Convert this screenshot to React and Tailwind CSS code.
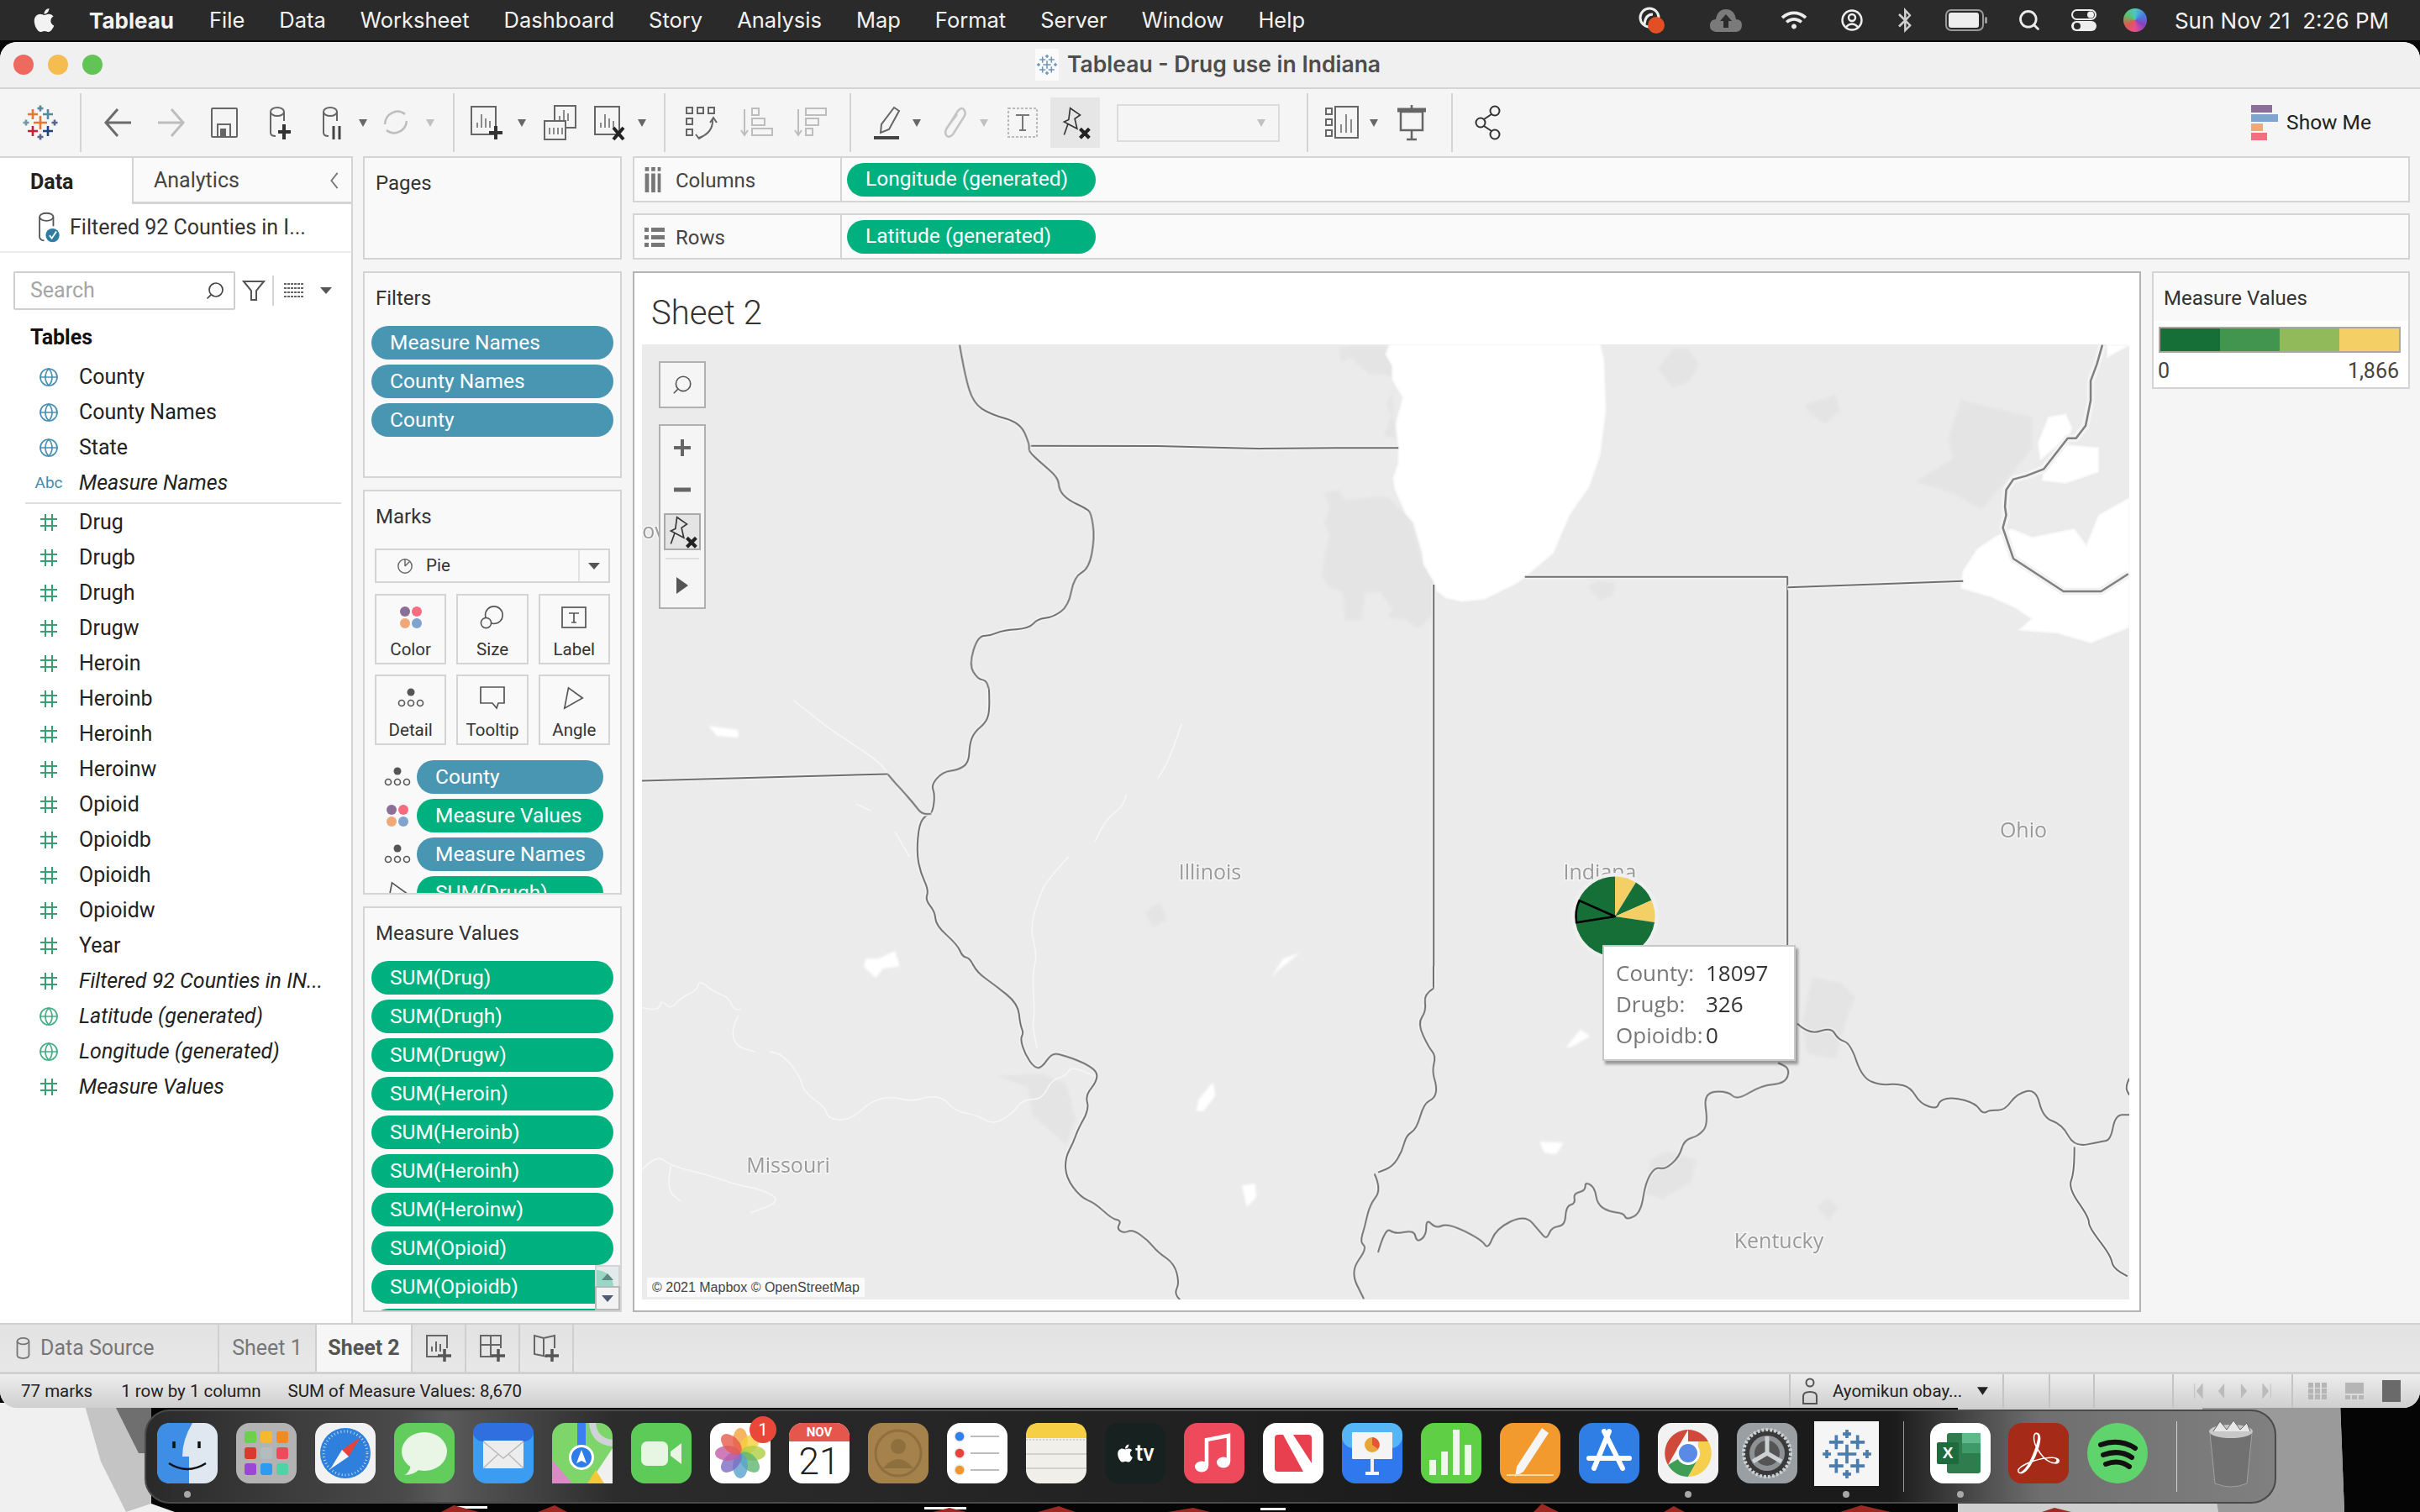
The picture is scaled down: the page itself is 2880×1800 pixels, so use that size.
import { Globe, Search } from "lucide-react";
import { FaApple, FaWifi, FaBluetoothB } from "react-icons/fa";
import { SiAdobeacrobatreader } from "react-icons/si";

const menuItems = ["File", "Data", "Worksheet", "Dashboard", "Story", "Analysis", "Map", "Format", "Server", "Window", "Help"];

const tableFields = [
  { name: "County", kind: "globe" },
  { name: "County Names", kind: "globe" },
  { name: "State", kind: "globe" },
  { name: "Measure Names", kind: "abc", italic: true }
];

const measureFields = [
  { name: "Drug", kind: "hash" },
  { name: "Drugb", kind: "hash" },
  { name: "Drugh", kind: "hash" },
  { name: "Drugw", kind: "hash" },
  { name: "Heroin", kind: "hash" },
  { name: "Heroinb", kind: "hash" },
  { name: "Heroinh", kind: "hash" },
  { name: "Heroinw", kind: "hash" },
  { name: "Opioid", kind: "hash" },
  { name: "Opioidb", kind: "hash" },
  { name: "Opioidh", kind: "hash" },
  { name: "Opioidw", kind: "hash" },
  { name: "Year", kind: "hash" },
  { name: "Filtered 92 Counties in IN...", kind: "hash", italic: true },
  { name: "Latitude (generated)", kind: "geo", italic: true },
  { name: "Longitude (generated)", kind: "geo", italic: true },
  { name: "Measure Values", kind: "hash", italic: true }
];

const measureValues = ["SUM(Drug)", "SUM(Drugh)", "SUM(Drugw)", "SUM(Heroin)", "SUM(Heroinb)", "SUM(Heroinh)", "SUM(Heroinw)", "SUM(Opioid)", "SUM(Opioidb)", ""];

// map transforms: each group was traced in its own crop of the map
const Z8 = "translate(740 320) scale(.5102 .3333)";
const Z9 = "translate(2100 320) scale(.4975 .3333)";
const Z10 = "translate(764 820) scale(.5735 .4656)";
const Z11 = "translate(1640 1150) scale(.5735 .3342)";
const Z12 = "translate(1500 405) scale(.4464 .3333)";

const rivers_borders = [
  [Z8, "788,272 800,380 820,480 860,520 930,550 952,632 948,650 975,690 1018,745 1020,790 1040,825 1082,855 1095,872 1103,960 1090,1070 1055,1100 1042,1205 1005,1245 970,1250 950,1285 890,1290 860,1310 830,1312 810,1415 830,1465 850,1470 856,1500"],
  [Z10, "720,0 722,50 715,85 690,110 680,140 678,190 655,208 625,212 600,245 608,270 603,318 590,322 575,345 570,420 578,470 595,515 588,540 608,570 610,605 655,655 665,685 680,688 695,725 735,760 780,805 785,860 792,880 785,895 795,935 815,970 830,968 850,932 870,935 915,955 945,978 943,1005 920,1040 928,1075 905,1125 895,1160 878,1200 880,1250 910,1300 940,1315 975,1355 995,1360 985,1380 1000,1392 1018,1382 1050,1410 1070,1440 1105,1470 1115,1520 1105,1545 1118,1565"],
  [Z10, "510,218 525,240 540,260 565,295 580,320 600,320"],
  [Z11, "115,80 95,100 100,160 82,205 105,290 120,320 112,375 122,430 118,470 95,490 80,580 58,605 50,660 30,715 0,735"],
  [Z10, "1520,1240 1535,1280 1510,1320 1500,1375 1490,1415 1505,1430 1470,1490 1498,1560"],
  [Z11, "0,1020 15,930 35,955 75,940 80,985 100,960 100,900 120,935 145,915 215,975 228,1010 245,935 305,885 335,945 350,975 360,930 388,925 390,855 410,845 405,810 430,800 430,768 450,790 455,850 480,875 510,880 515,905 545,880 555,770 575,715 595,725 625,680 635,620 665,605 685,565 675,450 725,445 745,478 795,425 845,418 855,365 830,345"],
  [Z11, "870,205 895,245 940,218 955,262 980,275 1005,400 1045,425 1075,418 1105,432 1125,490 1160,510 1165,478 1195,467 1240,490 1255,527 1270,512 1300,515 1325,455 1365,437 1380,540 1420,565 1445,645 1500,625 1520,620 1530,530 1559,530"],
  [Z11, "1445,645 1445,735 1432,790 1475,895 1475,930 1520,1030 1525,1075 1555,1105"],
  [Z11, "1559,400 1550,430 1559,460"]
];

const straightBorders = [
  [Z10, "0,235 510,218"],
  [Z8, "952,632 1250,633 1500,643 1568,642"],
  [Z12, "0,387 200,385 368,385"],
  [Z12, "462,873 462,2313"],
  [Z12, "705,845 1405,845 1405,2430"],
  [Z12, "1405,884 1568,877"],
  [Z9, "55,1138 475,1115"],
  [Z11, "115,0 115,80"]
];

const michigan = "808,272 795,340 780,400 780,470 768,560 745,605 725,605 668,715 625,740 595,752 578,790 575,850 578,880 570,925 595,1035 715,1152 805,1152 870,1090";

const rivers = [
  "0,815 35,825 40,795 60,820 80,790 115,770 118,745 150,775 180,790 190,820 205,820",
  "200,835 185,870 195,915 235,928",
  "265,928 290,930 330,995 335,1030 380,1070 385,1095 410,1104 440,1095 475,1055 515,1042 560,1055 595,1042 625,1045 650,1080 695,1090 730,1115 770,1085 790,1050 830,1050 850,1000 880,990 890,965 940,990",
  "1120,90 1095,180 1070,230",
  "1005,270 1000,300 965,330 940,390",
  "885,430 840,490 825,530 805,610 820,680 810,730 815,830 810,860 820,920",
  "0,1230 30,1190 60,1220 130,1240 200,1270 250,1280 290,1310 225,1340",
  "60,1220 50,1280 80,1310",
  "315,30 380,95 430,135 490,185 510,215",
  "525,365 555,430",
  "445,295 475,312"
];

const lakes = [
  [Z12, "345,16 335,50 352,90 352,140 380,205 362,300 368,385 368,440 355,490 358,530 388,620 408,650 432,760 436,800 462,860 470,895 495,920 535,932 595,925 680,870 705,845 780,760 825,620 875,525 905,410 920,250 915,70 905,16"],
  [Z9, "670,700 720,630 798,640 798,725 720,765 665,755"],
  [Z9, "660,680 655,620 680,530 720,520 735,570 725,600"],
  [Z9, "872,820 800,880 770,990 740,930 640,960 590,930 550,960 510,1000 475,1080 470,1140 540,1170 600,1210 640,1250 610,1290 700,1300 780,1335 872,1280"],
  [Z9, "820,272 872,272 820,315"]
];

const ponds = [
  [Z10, "465,690 490,690 525,670 535,710 500,715 485,740 460,710"],
  [Z10, "1185,1005 1190,1040 1165,1080 1150,1080 1155,1050"],
  [Z10, "1245,1270 1272,1265 1275,1300 1255,1325"],
  [Z10, "1305,740 1330,690 1365,675 1345,695 1320,720"],
  [Z10, "138,95 200,105 200,125 155,120"],
  [Z11, "335,625 385,630 370,670 345,665"],
  [Z11, "390,290 420,225 440,250 400,290"]
];

const patches = [
  [Z12, "170,545 210,535 225,570 300,560 340,560 400,640 435,800 462,860 462,980 420,1030 390,1000 340,990 350,960 320,900 280,900 270,1000 225,1000 220,900 180,880 165,840 175,740 185,700 170,650 185,600"],
  [Z12, "210,30 240,20 335,20 335,50 352,90 352,210 360,350 330,340 350,270 335,230 355,180 350,130 320,120 290,120 260,90 240,60 215,80"],
  [Z12, "1060,100 1100,30 1140,30 1170,90 1140,150 1100,170"],
  [Z12, "1450,230 1530,200 1545,250 1510,295 1470,270"],
  [Z12, "875,880 900,860 945,870 940,910 905,930"],
  [Z9, "440,600 470,470 640,530 640,640 520,860 450,800 360,760 450,680"],
  [Z9, "95,490 170,450 180,510 140,550"],
  [Z10, "740,990 830,985 880,1010 900,1100 880,1165 810,1090 800,1020"],
  [Z10, "1045,570 1075,545 1090,590 1060,610"],
  [Z11, "880,200 900,40 960,60 990,110 970,200 950,330 890,310"],
  [Z11, "565,690 600,660 660,690 650,770 590,830 555,810"],
  [Z11, "910,860 935,825 955,860 935,905"]
];

// rounds the traced points into a curve so rivers don't look faceted
function smooth(points) {
  const p = points.split(" ").map((s) => s.split(",").map(Number));
  let d = `M${p[0][0]} ${p[0][1]}`;
  for (let i = 1; i < p.length - 1; i++) {
    d += ` Q${p[i][0]} ${p[i][1]} ${(p[i][0] + p[i + 1][0]) / 2} ${(p[i][1] + p[i + 1][1]) / 2}`;
  }
  const last = p[p.length - 1];
  return `${d} L${last[0]} ${last[1]}`;
}

function Line({ t, points, curved, halo = 5, color = "#6f6f6f", width = 2 }) {
  const d = curved ? smooth(points) : `M${points.replaceAll(" ", " L")}`;
  return (
    <g transform={t} fill="none" strokeLinejoin="round">
      <path d={d} stroke="#f3f3f3" strokeWidth={halo} vectorEffect="non-scaling-stroke" />
      <path d={d} stroke={color} strokeWidth={width} vectorEffect="non-scaling-stroke" />
    </g>
  );
}

function slice(a0, a1, r = 47.5) {
  const cx = 1922;
  const cy = 1091;
  const p = (a) => [cx + r * Math.sin((a * Math.PI) / 180), cy - r * Math.cos((a * Math.PI) / 180)];
  const [x0, y0] = p(a0);
  const [x1, y1] = p(a1);
  return `M${cx} ${cy} L${x0} ${y0} A${r} ${r} 0 ${a1 - a0 > 180 ? 1 : 0} 1 ${x1} ${y1} Z`;
}

function MapLabel({ x, y, children }) {
  return (
    <text x={x} y={y} textAnchor="middle" fontFamily="'Open Sans', sans-serif" fontSize="25" fill="#9a9a9a" stroke="#f6f6f6" strokeWidth="3" paintOrder="stroke">
      {children}
    </text>
  );
}

function MapDrawing() {
  return (
    <svg viewBox="764 410 1770 1137" className="block w-[1770px] h-[1137px]">
      <defs>
        <filter id="soft" x="-5%" y="-5%" width="110%" height="110%">
          <feGaussianBlur stdDeviation="1.5" />
        </filter>
        <filter id="mottle" x="0" y="0" width="100%" height="100%">
          <feTurbulence type="fractalNoise" baseFrequency="0.012" numOctaves="3" seed="4" />
          <feColorMatrix values="0 0 0 0 0.84  0 0 0 0 0.84  0 0 0 0 0.84  0 0 0 0.6 -0.2" />
        </filter>
      </defs>
      <rect x="764" y="410" width="1770" height="1137" fill="#ebebeb" />
      <rect x="764" y="410" width="1770" height="1137" filter="url(#mottle)" />
      <g filter="url(#soft)">
        {patches.map(([t, pts], i) => (
          <polygon key={i} transform={t} points={pts} fill="#e4e4e4" />
        ))}
      </g>
      {lakes.map(([t, pts], i) => (
        <polygon key={i} transform={t} points={pts} fill="#ffffff" stroke="#f8f8f8" strokeWidth="2" vectorEffect="non-scaling-stroke" strokeLinejoin="round" />
      ))}
      <g filter="url(#soft)">
        {ponds.map(([t, pts], i) => (
          <polygon key={i} transform={t} points={pts} fill="#ffffff" />
        ))}
      </g>
      <g transform={Z10} fill="none" stroke="#f6f6f6" strokeWidth="1.6" strokeLinejoin="round">
        {rivers.map((pts, i) => (
          <path key={i} d={smooth(pts)} vectorEffect="non-scaling-stroke" />
        ))}
      </g>
      <Line t={Z9} points={michigan} halo={9} color="#808080" width={2.5} />
      {straightBorders.map(([t, pts], i) => (
        <Line key={i} t={t} points={pts} />
      ))}
      {rivers_borders.map(([t, pts], i) => (
        <Line key={i} t={t} points={pts} curved />
      ))}
      <MapLabel x="1440" y="1047">Illinois</MapLabel>
      <MapLabel x="938" y="1396">Missouri</MapLabel>
      <MapLabel x="2117" y="1486">Kentucky</MapLabel>
      <MapLabel x="2408" y="997">Ohio</MapLabel>
      <MapLabel x="1904" y="1047">Indiana</MapLabel>
      <MapLabel x="778" y="641">ov</MapLabel>
      <circle cx="1922" cy="1091" r="52" fill="#efefef" />
      <path d={slice(0, 31.6)} fill="#f3cf65" />
      <path d={slice(31.6, 66)} fill="#156f37" />
      <path d={slice(66, 98.4)} fill="#f3cf65" />
      <path d={slice(98.4, 261)} fill="#156f37" />
      <path d={slice(294, 360)} fill="#156f37" />
      <path d={slice(261, 294, 46.5)} fill="#156f37" stroke="#000" strokeWidth="2.5" strokeLinejoin="round" />
    </svg>
  );
}

function Ic({ children, className = "" }) {
  return (
    <svg viewBox="0 0 44 44" fill="none" stroke="#666" strokeWidth="2" className={`w-[44px] h-[44px] shrink-0 ${className}`}>
      {children}
    </svg>
  );
}

function Caret({ light, className = "" }) {
  return (
    <svg viewBox="0 0 12 12" className={`w-[12px] h-[12px] shrink-0 ${className}`}>
      <path d="M1 2 H11 L6 11 Z" fill={light ? "#c0c0c0" : "#666"} />
    </svg>
  );
}

function Sep({ className = "" }) {
  return <div className={`w-[2px] h-[70px] bg-[#d4d4d4] shrink-0 ${className}`} />;
}

function Cross({ x, y, s, c }) {
  return (
    <path d={`M${x} ${y - s} V${y + s} M${x - s} ${y} H${x + s}`} stroke={c} />
  );
}

function TableauMark({ className, mono }) {
  const c = (col) => mono || col;
  return (
    <svg viewBox="0 0 44 44" className={className} fill="none" strokeWidth="2.6">
      <Cross x={22} y={22} s={8} c={c("#e8762c")} />
      <Cross x={13} y={12} s={6} c={c("#e8762c")} />
      <Cross x={31} y={12} s={6} c={c("#5b879b")} />
      <Cross x={13} y={32} s={6} c={c("#c72035")} />
      <Cross x={31} y={32} s={6} c={c("#1f447e")} />
      <Cross x={22} y={5} s={3.5} c={c("#59879b")} />
      <Cross x={22} y={39} s={3.5} c={c("#5b6591")} />
      <Cross x={5} y={22} s={3.5} c={c("#7099a6")} />
      <Cross x={39} y={22} s={3.5} c={c("#5b6591")} />
    </svg>
  );
}

function DbIcon() {
  return (
    <>
      <ellipse cx="22" cy="9" rx="8" ry="5" />
      <path d="M14 9 V34 Q14 38 20 38 M30 9 V20" />
    </>
  );
}

function PinX() {
  return (
    <svg viewBox="0 0 44 44" className="w-[40px] h-[40px]" fill="none" stroke="#333" strokeWidth="1.8">
      <path d="M15 3 L28 12 L21 17 L24 30 L7 21 L13 18 Z" />
      <path d="M12 24 L7 38" />
      <path d="M28 30 L40 42 M40 30 L28 42" stroke="#222" strokeWidth="4.5" />
    </svg>
  );
}

function Toolbar() {
  return (
    <div className="h-[80px] pl-[26px] flex items-center shrink-0">
      <TableauMark className="w-[44px] h-[44px] shrink-0" />
      <Sep className="ml-[25px]" />
      <Ic className="ml-[21px]">
        <path d="M22 6 L8 22 L22 38 M8 22 H38" stroke="#6b6b6b" strokeWidth="3" />
      </Ic>
      <Ic className="ml-[20px]">
        <path d="M22 6 L36 22 L22 38 M6 22 H36" stroke="#bdbdbd" strokeWidth="3" />
      </Ic>
      <Ic className="ml-[19px]">
        <rect x="7" y="5" width="30" height="34" rx="1" />
        <rect x="14" y="24" width="15" height="15" />
        <rect x="18" y="30" width="5" height="9" fill="#666" />
      </Ic>
      <Ic className="ml-[19px]">
        <DbIcon />
        <path d="M30 24 V42 M23 33 H38" stroke="#333" strokeWidth="4" />
      </Ic>
      <Ic className="ml-[19px]">
        <DbIcon />
        <path d="M26 26 V42 M33 26 V42" stroke="#444" strokeWidth="3" />
      </Ic>
      <Caret className="ml-[11px]" />
      <Ic className="ml-[11px]">
        <path d="M33 12 A15 16 0 0 0 9 24 M11 31 A15 16 0 0 0 35 20" stroke="#bdbdbd" strokeWidth="2.5" />
      </Ic>
      <Caret light className="ml-[13px]" />
      <Sep className="ml-[21px]" />
      <Ic className="ml-[15px]">
        <rect x="5" y="3" width="29" height="33" />
        <path d="M12 28 V22 M17 28 V12 M22 28 V17 M27 28 V20" strokeWidth="1.5" />
        <path d="M34 26 V42 M26 34 H42" stroke="#333" strokeWidth="4" />
      </Ic>
      <Caret className="ml-[15px]" />
      <Ic className="ml-[17px]">
        <rect x="16" y="2" width="25" height="26" />
        <path d="M22 20 V14 M27 20 V7 M32 20 V11" strokeWidth="1.5" />
        <rect x="4" y="20" width="25" height="22" fill="#f5f5f5" />
        <path d="M10 36 V28 M15 36 V28 M20 36 V28 M25 36 V28" strokeWidth="1.5" />
      </Ic>
      <Ic className="ml-[15px]">
        <rect x="5" y="3" width="29" height="33" />
        <path d="M12 28 V22 M17 28 V12 M22 28 V17 M27 28 V20" strokeWidth="1.5" />
        <path d="M27 28 L39 42 M39 28 L27 42" stroke="#222" strokeWidth="4" />
      </Ic>
      <Caret className="ml-[11px]" />
      <Sep className="ml-[20px]" />
      <Ic className="ml-[20px]">
        <path d="M5 4 h7 v7 h-7 z M18 4 h7 v7 h-7 z M31 4 h7 v7 h-7 z M5 17 h7 v7 h-7 z M5 30 h7 v7 h-7 z" />
        <path d="M36 18 Q37 34 20 40 M16 36 L20 41 L25 38 M33 22 L37 16 L41 22" />
      </Ic>
      <Ic className="ml-[22px]">
        <g stroke="#bdbdbd">
          <path d="M8 6 V36 M4 31 L8 37 L12 31" />
          <rect x="17" y="5" width="8" height="8" />
          <rect x="17" y="17" width="15" height="8" />
          <rect x="17" y="29" width="24" height="8" />
        </g>
      </Ic>
      <Ic className="ml-[20px]">
        <g stroke="#bdbdbd">
          <path d="M8 6 V36 M4 31 L8 37 L12 31" />
          <rect x="17" y="5" width="24" height="8" />
          <rect x="17" y="17" width="15" height="8" />
          <rect x="17" y="29" width="8" height="8" />
        </g>
      </Ic>
      <Sep className="ml-[25px]" />
      <Ic className="ml-[21px]">
        <path d="M30 4 L36 8 L24 30 L14 34 L15 24 Z" />
        <path d="M6 40 H36" stroke="#444" strokeWidth="4" />
      </Ic>
      <Caret className="ml-[7px]" />
      <Ic className="ml-[15px]">
        <path d="M14 30 L28 8 Q33 2 36 8 Q38 12 34 17 L22 36 Q17 41 14 37 Q12 33 15 28 L27 12" stroke="#c4c4c4" strokeWidth="2.5" />
      </Ic>
      <Caret light className="ml-[9px]" />
      <Ic className="ml-[18px]">
        <rect x="5" y="5" width="34" height="34" stroke="#bbb" strokeDasharray="3 2" />
        <path d="M14 13 H30 M22 13 V31 M18 31 H26" stroke="#777" />
      </Ic>
      <div className="ml-[11px] w-[59px] h-[60px] bg-[#e6e6e6] flex items-center justify-center shrink-0">
        <PinX />
      </div>
      <div className="ml-[20px] w-[194px] h-[45px] bg-[#f5f5f5] border-2 border-[#dcdcdc] flex items-center justify-end pr-[14px] shrink-0">
        <Caret light />
      </div>
      <Sep className="ml-[32px]" />
      <Ic className="ml-[19px]">
        <path d="M2 5 h7 v7 h-7 z M2 18 h7 v7 h-7 z M2 31 h7 v7 h-7 z" />
        <rect x="13" y="3" width="27" height="37" />
        <path d="M20 34 V24 M26 34 V12 M32 34 V18" strokeWidth="1.5" />
      </Ic>
      <Caret className="ml-[9px]" />
      <Ic className="ml-[17px]">
        <path d="M5 7 H39" stroke="#666" strokeWidth="5" />
        <rect x="9" y="9" width="26" height="22" strokeWidth="2.5" />
        <path d="M22 1 V5 M22 31 V42 M16 42 H28" strokeWidth="2.5" />
      </Ic>
      <Sep className="ml-[25px]" />
      <Ic className="ml-[20px]">
        <g stroke="#333">
          <circle cx="30" cy="8" r="5.5" />
          <circle cx="13" cy="22" r="5.5" />
          <circle cx="30" cy="36" r="5.5" />
          <path d="M26 12 L17 18 M17 26 L26 32" />
        </g>
      </Ic>
      <div className="ml-auto mr-[58px] flex items-center gap-[10px] shrink-0">
        <div className="flex flex-col gap-[2px] w-[32px]">
          <div className="h-[9px] w-[25px] bg-[#8c6f99]" />
          <div className="h-[9px] w-[32px] bg-[#7fa4cd]" />
          <div className="h-[9px] w-[14px] bg-[#f0a878]" />
          <div className="h-[9px] w-[19px] bg-[#f76d80]" />
        </div>
        <span className="text-[24.5px] text-[#222]">Show Me</span>
      </div>
    </div>
  );
}

function FieldIcon({ kind }) {
  if (kind === "abc") return <span className="text-[19px] text-[#4a89ab]">Abc</span>;
  if (kind === "globe") return <Globe className="w-[24px] h-[24px] text-[#4a8fb3]" strokeWidth={1.7} />;
  if (kind === "geo") return <Globe className="w-[24px] h-[24px] text-[#46ad86]" strokeWidth={1.7} />;
  return (
    <svg viewBox="0 0 22 22" className="w-[22px] h-[22px]" stroke="#3f9c72" strokeWidth="2" fill="none">
      <path d="M7 1 V21 M15 1 V21 M1 7 H21 M1 15 H21" />
    </svg>
  );
}

function FieldRow({ name, kind, italic }) {
  return (
    <div className="h-[42px] flex items-center pl-[38px]">
      <div className="w-[40px] flex justify-center shrink-0">
        <FieldIcon kind={kind} />
      </div>
      <span className={`ml-[16px] text-[25px] text-[#222] whitespace-nowrap ${italic ? "italic" : ""}`}>{name}</span>
    </div>
  );
}

function DataPanel() {
  return (
    <aside className="w-[420px] h-full bg-white border-r-2 border-[#d4d4d4] shrink-0">
      <div className="h-[57px] flex border-t-2 border-[#d4d4d4]">
        <div className="w-[157px] flex items-center pl-[36px] pt-[2px] text-[25px] font-bold text-[#222]">Data</div>
        <div className="flex-1 flex items-center bg-[#fafafa] border-l-2 border-b-[3px] border-l-[#d4d4d4] border-b-[#d4d4d4] pl-[24px] pt-[2px] text-[25px] text-[#444]">
          <span>Analytics</span>
          <svg viewBox="0 0 12 24" className="ml-auto mr-[14px] w-[12px] h-[22px]" fill="none" stroke="#777" strokeWidth="2">
            <path d="M10 2 L2 12 L10 22" />
          </svg>
        </div>
      </div>
      <div className="h-[58px] flex items-center pl-[44px] border-b-2 border-[#ececec]">
        <svg viewBox="0 0 30 44" className="w-[28px] h-[40px] shrink-0" fill="none" stroke="#555" strokeWidth="2">
          <ellipse cx="12" cy="8" rx="9" ry="5" />
          <path d="M3 8 V34 Q3 38 9 39 M21 8 V20" />
          <circle cx="20" cy="32" r="9" fill="#2f7da3" stroke="none" />
          <path d="M16 32 L19 36 L25 27" stroke="#fff" />
        </svg>
        <span className="ml-[11px] text-[25px] text-[#333] whitespace-nowrap">Filtered 92 Counties in I...</span>
      </div>
      <div className="mt-[22px] pl-[16px] flex items-center">
        <div className="w-[264px] h-[46px] border-2 border-[#cfcfcf] rounded-[2px] flex items-center pl-[18px] pr-[10px] text-[25px] text-[#a5a5a5]">
          <span>Search</span>
          <Search className="ml-auto w-[24px] h-[24px] text-[#444] -scale-x-100" strokeWidth={1.7} />
        </div>
        <svg viewBox="0 0 28 28" className="ml-[8px] w-[28px] h-[28px]" fill="none" stroke="#555" strokeWidth="2">
          <path d="M2 3 H26 L17 14 V25 H11 V14 Z" />
        </svg>
        <div className="ml-[8px] w-[2px] h-[36px] bg-[#d4d4d4]" />
        <svg viewBox="0 0 26 20" className="ml-[11px] w-[26px] h-[20px]" stroke="#666" strokeWidth="2" strokeDasharray="3 1">
          <path d="M1 2 H25 M1 7 H25 M1 12 H25 M1 17 H25" />
        </svg>
        <svg viewBox="0 0 14 8" className="ml-[18px] w-[14px] h-[8px]">
          <path d="M0 0 H14 L7 8 Z" fill="#555" />
        </svg>
      </div>
      <div className="h-[42px] mt-[12px] pl-[36px] flex items-center text-[25px] font-bold text-[#111]">Tables</div>
      <div className="mt-[5px]">
        {tableFields.map((f) => (
          <FieldRow key={f.name} {...f} />
        ))}
      </div>
      <div className="ml-[30px] w-[376px] h-[2px] mt-[2px] mb-[1px] bg-[#dedede]" />
      {measureFields.map((f) => (
        <FieldRow key={f.name} {...f} />
      ))}
    </aside>
  );
}

function Pill({ label, tone, className = "" }) {
  const bg = tone === "blue" ? "bg-[#4996b2]" : "bg-[#00b180]";
  return (
    <div className={`${bg} h-[40px] shrink-0 rounded-full flex items-center pl-[22px] text-[24.5px] text-white whitespace-nowrap overflow-hidden ${className}`}>
      {label}
    </div>
  );
}

function Card({ title, className = "", children }) {
  return (
    <section className={`relative bg-[#f9f9f9] border-2 border-[#d4d4d4] overflow-hidden shrink-0 ${className}`}>
      <div className="h-[56px] flex items-center pl-[13px] pt-[3px] text-[24px] text-[#333]">{title}</div>
      {children}
    </section>
  );
}

function ColorDots({ className = "" }) {
  return (
    <svg viewBox="0 0 28 28" className={`w-[28px] h-[28px] ${className}`}>
      <circle cx="7" cy="7" r="6" fill="#8c6f99" />
      <circle cx="21" cy="7" r="6" fill="#f76d80" />
      <circle cx="7" cy="21" r="6" fill="#f0a878" />
      <circle cx="21" cy="21" r="6" fill="#7fa4cd" />
    </svg>
  );
}

function DetailDots({ className = "" }) {
  return (
    <svg viewBox="0 0 32 24" className={`w-[32px] h-[24px] ${className}`} fill="none" stroke="#555" strokeWidth="1.6">
      <circle cx="16" cy="5" r="4.5" fill="#555" stroke="none" />
      <circle cx="5" cy="18" r="3.5" />
      <circle cx="16" cy="18" r="3.5" />
      <circle cx="27" cy="18" r="3.5" />
    </svg>
  );
}

function MarkButton({ label, children }) {
  return (
    <div className="h-[84px] border-2 border-[#d4d4d4] flex flex-col items-center pt-[10px] bg-[#f9f9f9]">
      <div className="h-[32px] flex items-center justify-center">{children}</div>
      <span className="mt-[10px] text-[20.5px] text-[#333] leading-[24px]">{label}</span>
    </div>
  );
}

function AngleIcon({ className = "" }) {
  return (
    <svg viewBox="0 0 30 32" className={`w-[28px] h-[30px] ${className}`} fill="none" stroke="#555" strokeWidth="1.8">
      <path d="M8 3 L26 16 L3 29 Z" />
    </svg>
  );
}

function MarksCard() {
  return (
    <Card title="Marks" className="h-[482px]">
      <div className="ml-[12px] mt-[12px] w-[280px] h-[41px] border-2 border-[#d4d4d4] flex items-center">
        <svg viewBox="0 0 22 22" className="ml-[24px] w-[20px] h-[20px]" fill="none" stroke="#666" strokeWidth="1.6">
          <circle cx="11" cy="11" r="9" />
          <path d="M11 11 L11 2 M11 11 L17 5" />
        </svg>
        <span className="ml-[15px] text-[20.5px] text-[#333]">Pie</span>
        <div className="ml-auto w-[36px] h-full border-l-2 border-[#e2e2e2] flex items-center justify-center">
          <svg viewBox="0 0 14 8" className="w-[14px] h-[8px]">
            <path d="M0 0 H14 L7 8 Z" fill="#555" />
          </svg>
        </div>
      </div>
      <div className="ml-[12px] mt-[13px] w-[280px] grid grid-cols-3 gap-[12px]">
        <MarkButton label="Color">
          <ColorDots />
        </MarkButton>
        <MarkButton label="Size">
          <svg viewBox="0 0 32 32" className="w-[30px] h-[30px]" fill="none" stroke="#555" strokeWidth="1.7">
            <circle cx="18" cy="13" r="11" />
            <circle cx="8" cy="23" r="6.5" fill="#f9f9f9" />
          </svg>
        </MarkButton>
        <MarkButton label="Label">
          <svg viewBox="0 0 30 26" className="w-[30px] h-[26px]" fill="none" stroke="#555" strokeWidth="1.7">
            <rect x="1" y="1" width="28" height="24" />
            <path d="M9 8 H21 M15 8 V19 M12 19 H18" />
          </svg>
        </MarkButton>
        <MarkButton label="Detail">
          <DetailDots />
        </MarkButton>
        <MarkButton label="Tooltip">
          <svg viewBox="0 0 30 28" className="w-[30px] h-[28px]" fill="none" stroke="#555" strokeWidth="1.7">
            <path d="M1 1 H29 V20 H22 L20 26 L15 20 H1 Z" />
          </svg>
        </MarkButton>
        <MarkButton label="Angle">
          <AngleIcon />
        </MarkButton>
      </div>
      <div className="mt-[18px] flex flex-col gap-[6px]">
        <div className="flex items-center">
          <div className="w-[62px] flex justify-center pl-[16px]"><DetailDots /></div>
          <Pill label="County" tone="blue" className="w-[222px]" />
        </div>
        <div className="flex items-center">
          <div className="w-[62px] flex justify-center pl-[16px]"><ColorDots /></div>
          <Pill label="Measure Values" className="w-[222px]" />
        </div>
        <div className="flex items-center">
          <div className="w-[62px] flex justify-center pl-[16px]"><DetailDots /></div>
          <Pill label="Measure Names" tone="blue" className="w-[222px]" />
        </div>
        <div className="flex items-center">
          <div className="w-[62px] flex justify-center pl-[16px]"><AngleIcon /></div>
          <Pill label="SUM(Drugh)" className="w-[222px]" />
        </div>
      </div>
    </Card>
  );
}

function MeasureValuesCard() {
  return (
    <Card title="Measure Values" className="h-[483px]">
      <div className="mt-[7px] px-[8px] flex flex-col gap-[6px]">
        {measureValues.map((m, i) => (
          <Pill key={i} label={m} />
        ))}
      </div>
      <div className="absolute right-0 bottom-0 w-[30px] h-[54px] flex flex-col">
        <div className="h-[25px] bg-[#d8e6e2]/70 border-2 border-b-0 border-[#d4d4d4] flex items-center justify-center">
          <svg viewBox="0 0 14 8" className="w-[14px] h-[8px]">
            <path d="M0 8 H14 L7 0 Z" fill="#5e8a82" />
          </svg>
        </div>
        <div className="flex-1 bg-[#f2f2f2] border-2 border-[#b8b8b8] flex items-center justify-center">
          <svg viewBox="0 0 14 8" className="w-[14px] h-[8px]">
            <path d="M0 0 H14 L7 8 Z" fill="#4e5a73" />
          </svg>
        </div>
      </div>
    </Card>
  );
}

function Shelf({ label, icon, pill, className = "" }) {
  return (
    <div className={`h-[55px] bg-[#fafafa] border-2 border-[#d4d4d4] flex items-center ${className}`}>
      <div className="w-[247px] h-full border-r-2 border-[#d4d4d4] flex items-center pl-[12px] shrink-0">
        <div className="w-[24px] flex items-center">{icon}</div>
        <span className="ml-[13px] pt-[2px] text-[24px] text-[#444]">{label}</span>
      </div>
      <Pill label={pill} className="ml-[6px] w-[296px]" />
    </div>
  );
}

function MapControlBox({ children, className = "" }) {
  return <div className={`w-[56px] bg-[#f5f5f5] border-2 border-[#b0b0b0] flex flex-col items-center ${className}`}>{children}</div>;
}

function Viz() {
  return (
    <div className="w-[1795px] h-full bg-white border-2 border-[#b4b4b4] shrink-0 flex flex-col">
      <div className="h-[85px] pl-[20px] pt-[11px] flex items-center text-[40px] font-light text-[#333]">Sheet 2</div>
      <div className="relative ml-[9px] w-[1770px] h-[1137px] overflow-hidden">
        <MapDrawing />
        <div className="absolute left-[20px] top-[20px] flex flex-col gap-[19px]">
          <MapControlBox className="h-[56px] justify-center">
            <Search className="w-[26px] h-[26px] text-[#555] -scale-x-100" strokeWidth={1.5} />
          </MapControlBox>
          <MapControlBox className="h-[220px]">
            <svg viewBox="0 0 22 22" className="mt-[15px] w-[22px] h-[22px] shrink-0" stroke="#666" strokeWidth="4">
              <path d="M11 1 V21 M1 11 H21" />
            </svg>
            <svg viewBox="0 0 22 6" className="mt-[36px] w-[22px] h-[6px] shrink-0" stroke="#666" strokeWidth="5">
              <path d="M1 3 H21" />
            </svg>
            <div className="mt-[25px] w-[44px] h-[44px] bg-[#e4e4e4] border-2 border-[#aaa] flex items-center justify-center shrink-0">
              <PinX />
            </div>
            <div className="mt-[9px] w-[40px] h-[2px] bg-[#ddd] shrink-0" />
            <svg viewBox="0 0 14 20" className="mt-[21px] w-[14px] h-[20px] shrink-0">
              <path d="M0 0 L14 10 L0 20 Z" fill="#555" />
            </svg>
          </MapControlBox>
        </div>
        <div className="absolute left-[6px] bottom-[3px] h-[23px] px-[6px] bg-[#fafafa] flex items-center text-[16px] text-[#444] font-['Liberation_Sans',sans-serif] whitespace-nowrap">
          © 2021 Mapbox © OpenStreetMap
        </div>
        <div className="absolute left-[1143px] top-[715px] w-[230px] h-[138px] bg-white border-2 border-[#c8c8c8] shadow-[3px_4px_3px_rgba(0,0,0,0.35)] pl-[14px] pt-[13px] font-['Open_Sans',sans-serif] text-[26px] leading-[37px]">
          <div className="flex"><span className="w-[107px] text-[#777]">County:</span><span className="text-[#333]">18097</span></div>
          <div className="flex"><span className="w-[107px] text-[#777]">Drugb:</span><span className="text-[#333]">326</span></div>
          <div className="flex"><span className="w-[107px] text-[#777]">Opioidb:</span><span className="text-[#333]">0</span></div>
        </div>
      </div>
    </div>
  );
}

function Legend() {
  return (
    <div className="ml-[13px] w-[307px] h-[140px] bg-white border-2 border-[#d4d4d4] shrink-0">
      <div className="h-[57px] bg-[#f9f9f9] pl-[12px] pt-[3px] flex items-center text-[24px] text-[#333]">Measure Values</div>
      <div className="ml-[6px] mt-[7px] w-[288px] h-[31px] border-2 border-[#a8a8a0] flex">
        <div className="flex-1 bg-[#156f37]" />
        <div className="flex-1 bg-[#42954f]" />
        <div className="flex-1 bg-[#91ba5b]" />
        <div className="flex-1 bg-[#f3cf65]" />
      </div>
      <div className="ml-[5px] w-[287px] mt-[7px] flex justify-between text-[25px] leading-[30px] text-[#444]">
        <span>0</span>
        <span>1,866</span>
      </div>
    </div>
  );
}

function AddTab({ children }) {
  return (
    <div className="w-[64px] h-full border-r-2 border-[#cfcfcf] flex items-center justify-center shrink-0">
      <svg viewBox="0 0 32 34" className="w-[32px] h-[34px]" fill="none" stroke="#666" strokeWidth="2">
        {children}
        <path d="M23 18 V33 M15 26 H31" stroke="#555" strokeWidth="3.5" />
      </svg>
    </div>
  );
}

function TabBar() {
  return (
    <div className="h-[61px] border-t-2 border-b-[3px] border-[#d0d0d0] bg-[linear-gradient(#e2e2e2,#e8e8e8)] flex shrink-0">
      <div className="w-[261px] h-full border-r-2 border-[#cfcfcf] flex items-center pl-[19px] text-[25px] text-[#777]">
        <svg viewBox="0 0 18 28" className="w-[17px] h-[26px]" fill="none" stroke="#777" strokeWidth="2">
          <ellipse cx="9" cy="5" rx="7.5" ry="4" />
          <path d="M1.5 5 V23 Q1.5 27 9 27 Q16.5 27 16.5 23 V5" />
        </svg>
        <span className="ml-[12px]">Data Source</span>
      </div>
      <div className="w-[116px] h-full border-r-2 border-[#cfcfcf] flex items-center justify-center text-[25px] text-[#777]">Sheet 1</div>
      <div className="w-[114px] h-full border-r-2 border-[#cfcfcf] bg-[#f6f6f6] flex items-center justify-center text-[25px] font-bold text-[#555]">Sheet 2</div>
      <AddTab>
        <path d="M17 27 H2 V2 H26 V17 M8 21 V15 M13 21 V9 M18 21 V12" />
      </AddTab>
      <AddTab>
        <path d="M17 27 H2 V2 H26 V17 M2 13 H26 M14 2 V27" />
      </AddTab>
      <AddTab>
        <path d="M17 27 L2 24 V2 L13 5 L26 2 V17 M13 5 V27" />
      </AddTab>
    </div>
  );
}

function StatusBar() {
  return (
    <div className="h-[40px] bg-[linear-gradient(#ededed,#cfcfcf)] flex items-center text-[20.5px] text-[#222] shrink-0">
      <span className="ml-[25px] whitespace-nowrap">77 marks</span>
      <span className="ml-[34px] whitespace-nowrap">1 row by 1 column</span>
      <span className="ml-[32px] whitespace-nowrap">SUM of Measure Values: 8,670</span>
      <div className="ml-auto h-full flex items-center">
        <div className="w-[254px] h-full border-l-2 border-[#c4c4c4] flex items-center pl-[12px]">
          <svg viewBox="0 0 22 32" className="w-[22px] h-[32px]" fill="none" stroke="#555" strokeWidth="2">
            <circle cx="11" cy="6" r="4.5" />
            <path d="M3 31 V22 Q3 17 11 17 Q19 17 19 22 V31 Z" />
          </svg>
          <span className="ml-[16px] whitespace-nowrap">Ayomikun obay...</span>
          <svg viewBox="0 0 14 10" className="ml-[18px] w-[13px] h-[10px]">
            <path d="M0 0 H14 L7 10 Z" fill="#222" />
          </svg>
        </div>
        <div className="w-[55px] h-full border-l-2 border-[#c4c4c4]" />
        <div className="w-[53px] h-full border-l-2 border-[#c4c4c4]" />
        <div className="w-[94px] h-full border-l-2 border-[#c4c4c4]" />
        <div className="w-[142px] h-full border-l-2 border-[#c4c4c4] flex items-center justify-around px-[14px]">
          <svg viewBox="0 0 14 24" className="w-[12px] h-[22px]"><path d="M2 2 V22 M13 2 L5 12 L13 22 Z" fill="#bbb" stroke="#bbb" /></svg>
          <svg viewBox="0 0 10 24" className="w-[9px] h-[22px]"><path d="M9 2 L1 12 L9 22 Z" fill="#bbb" /></svg>
          <svg viewBox="0 0 10 24" className="w-[9px] h-[22px]"><path d="M1 2 L9 12 L1 22 Z" fill="#bbb" /></svg>
          <svg viewBox="0 0 14 24" className="w-[12px] h-[22px]"><path d="M12 2 V22 M1 2 L9 12 L1 22 Z" fill="#bbb" stroke="#bbb" /></svg>
        </div>
        <div className="w-[153px] h-full border-l-2 border-[#c4c4c4] flex items-center pl-[18px] gap-[22px]">
          <svg viewBox="0 0 22 20" className="w-[22px] h-[26px]" fill="#b5b5b5">
            <path d="M0 0 h6 v6 h-6 z M8 0 h6 v6 h-6 z M16 0 h6 v6 h-6 z M0 7 h6 v6 h-6 z M8 7 h6 v6 h-6 z M16 7 h6 v6 h-6 z M0 14 h6 v6 h-6 z M8 14 h6 v6 h-6 z M16 14 h6 v6 h-6 z" />
          </svg>
          <svg viewBox="0 0 22 20" className="w-[22px] h-[26px]" fill="#b5b5b5">
            <path d="M0 0 h22 v13 h-22 z M0 15 h6 v5 h-6 z M8 15 h6 v5 h-6 z M16 15 h6 v5 h-6 z" />
          </svg>
          <div className="w-[22px] h-[26px] bg-[#6a6a6a]" />
        </div>
      </div>
    </div>
  );
}

function Wallpaper() {
  return (
    <svg viewBox="0 0 2880 1800" className="absolute inset-0 w-[2880px] h-[1800px]">
      <rect width="2880" height="1800" fill="#050505" />
      <polygon points="0,1670 180,1670 180,1790 208,1800 0,1800" fill="#f0f0f0" />
      <polygon points="100,1670 180,1670 180,1790 150,1800 120,1740" fill="#c4c4c4" />
      <polygon points="135,1670 180,1670 180,1730 165,1730" fill="#6f6f6f" />
      <polygon points="2330,1670 2785,1670 2790,1800 2330,1800" fill="#cfcfcf" />
      <polygon points="2620,1670 2785,1670 2790,1800 2640,1800" fill="#9a9a9a" />
      <g fill="#fff">
        <rect x="540" y="1793" width="40" height="3" />
        <rect x="1100" y="1794" width="50" height="3" />
        <rect x="1500" y="1795" width="30" height="3" />
      </g>
      <g fill="#9c2a22">
        <path d="M525 1800 L540 1792 L570 1800 Z M640 1800 L660 1792 L675 1800 Z M1110 1800 L1130 1795 L1150 1800 Z M1235 1800 L1260 1793 L1280 1800 Z M1390 1800 L1420 1795 L1440 1800 Z M1825 1800 L1835 1790 L1855 1800 Z M1980 1800 L1992 1793 L2005 1800 Z M2190 1800 L2215 1792 L2250 1800 Z M2430 1800 L2445 1795 L2465 1800 Z" />
      </g>
    </svg>
  );
}

function MenuIcon({ children, className = "" }) {
  return <div className={`w-[44px] h-[48px] flex items-center justify-center shrink-0 text-[#ececec] ${className}`}>{children}</div>;
}

function MenuBar() {
  return (
    <div className="relative h-[48px] bg-[#2a2a2a] flex items-center text-[#f2f2f2] font-['Inter',sans-serif] text-[25.5px] shrink-0">
      <FaApple className="ml-[37px] w-[31px] h-[32px] shrink-0" />
      <span className="ml-[38px] font-bold text-[26px]">Tableau</span>
      <div className="ml-[42px] flex items-center gap-[41px]">
        {menuItems.map((m) => (
          <span key={m} className="whitespace-nowrap">{m}</span>
        ))}
      </div>
      <div className="ml-auto pr-[37px] flex items-center">
        <MenuIcon>
          <svg viewBox="0 0 32 34" className="w-[32px] h-[34px]">
            <circle cx="14" cy="14" r="11" fill="none" stroke="#eee" strokeWidth="3" />
            <path d="M8 22 Q9 10 18 10" fill="none" stroke="#eee" strokeWidth="3" />
            <circle cx="22" cy="23" r="10" fill="#e14f22" />
          </svg>
        </MenuIcon>
        <MenuIcon className="ml-[45px]">
          <svg viewBox="0 0 40 30" className="w-[40px] h-[30px]">
            <path d="M8 29 Q0 28 1 20 Q2 14 8 14 Q10 2 20 2 Q30 2 32 14 Q39 14 39 21 Q39 28 32 29 Z" fill="#7a7a7a" />
            <path d="M20 8 L27 16 H23 V24 H17 V16 H13 Z" fill="#2a2a2a" />
          </svg>
        </MenuIcon>
        <MenuIcon className="ml-[37px]">
          <FaWifi className="w-[30px] h-[26px]" />
        </MenuIcon>
        <MenuIcon className="ml-[25px]">
          <svg viewBox="0 0 26 26" className="w-[26px] h-[26px]" fill="none" stroke="#eee" strokeWidth="2.4">
            <circle cx="13" cy="13" r="11.5" />
            <circle cx="13" cy="10" r="4" />
            <path d="M6 21 Q13 14 20 21" />
          </svg>
        </MenuIcon>
        <MenuIcon className="ml-[19px]">
          <FaBluetoothB className="w-[20px] h-[30px] text-[#d0d0d0]" />
        </MenuIcon>
        <MenuIcon className="ml-[29px]">
          <svg viewBox="0 0 50 26" className="w-[50px] h-[26px] shrink-0">
            <rect x="1" y="1" width="44" height="24" rx="6" fill="none" stroke="#999" strokeWidth="2" />
            <rect x="4" y="4" width="36" height="18" rx="3" fill="#eee" />
            <rect x="47" y="9" width="3" height="8" rx="1.5" fill="#999" />
          </svg>
        </MenuIcon>
        <MenuIcon className="ml-[31px]">
          <Search className="w-[28px] h-[28px]" strokeWidth={2.4} />
        </MenuIcon>
        <MenuIcon className="ml-[21px]">
          <svg viewBox="0 0 30 26" className="w-[30px] h-[26px]">
            <rect x="1" y="1" width="28" height="11" rx="5.5" fill="none" stroke="#eee" strokeWidth="2" />
            <circle cx="23" cy="6.5" r="4" fill="#eee" />
            <rect x="0" y="14" width="30" height="12" rx="6" fill="#eee" />
            <circle cx="7" cy="20" r="4" fill="#2a2a2a" />
          </svg>
        </MenuIcon>
        <MenuIcon className="ml-[17px]">
          <div className="w-[28px] h-[28px] rounded-full bg-[conic-gradient(#4ec7c7,#4a7de0,#8a3fc0,#e24f8f,#e0574d,#5cc06a,#4ec7c7)]" />
        </MenuIcon>
        <span className="ml-[25px] whitespace-pre text-[26px]">Sun Nov 21  2:26 PM</span>
      </div>
    </div>
  );
}

function AppIcon({ bg = "#fff", children, className = "" }) {
  return (
    <svg viewBox="0 0 72 72" className={`w-[72px] h-[72px] ${className}`}>
      <rect width="72" height="72" rx="16" fill={bg} />
      {children}
    </svg>
  );
}

function Finder() {
  return (
    <AppIcon bg="#dfe7f0">
      <path d="M16 0 H42 Q30 20 30 40 H38 V72 H16 Q0 72 0 56 V16 Q0 0 16 0 Z" fill="#3e8ee6" />
      <path d="M20 22 V30 M50 22 V30" stroke="#111" strokeWidth="3.5" />
      <path d="M14 48 Q36 62 58 48" stroke="#111" strokeWidth="2.5" fill="none" />
    </AppIcon>
  );
}

function Launchpad() {
  const colors = ["#6dd04b", "#f5b82e", "#f08a24", "#d93a2b", "#b4bcc0", "#ef4a5c", "#9b47d6", "#2e9bf0", "#4fd3a5"];
  return (
    <AppIcon bg="#b3b3b3">
      {colors.map((c, i) => (
        <rect key={c} x={10 + (i % 3) * 19} y={10 + Math.floor(i / 3) * 19} width="14" height="14" rx="3" fill={c} />
      ))}
    </AppIcon>
  );
}

function Safari() {
  return (
    <AppIcon bg="#f2f2f2">
      <circle cx="36" cy="36" r="30" fill="#2f80dc" />
      <circle cx="36" cy="36" r="26" fill="none" stroke="#bcd7f3" strokeWidth="3" strokeDasharray="1 3" />
      <path d="M54 17 L40 40 L32 32 Z" fill="#e8433a" />
      <path d="M18 55 L32 32 L40 40 Z" fill="#f5f5f5" />
    </AppIcon>
  );
}

function Messages() {
  return (
    <AppIcon bg="#62cc5c">
      <ellipse cx="36" cy="34" rx="27" ry="23" fill="#e9f6e6" />
      <path d="M20 50 Q18 60 12 62 Q24 62 30 55 Z" fill="#e9f6e6" />
    </AppIcon>
  );
}

function Mail() {
  return (
    <AppIcon bg="#3a9df2">
      <rect width="72" height="22" y="0" rx="12" fill="#2f6fe0" />
      <rect x="12" y="21" width="48" height="33" rx="2" fill="#ededed" />
      <path d="M12 22 L36 42 L60 22 M12 54 L30 37 M60 54 L42 37" stroke="#b9b9b9" strokeWidth="1.5" fill="none" />
    </AppIcon>
  );
}

function Maps() {
  return (
    <AppIcon bg="#7ed66b">
      <path d="M0 44 L24 72 H0 Z" fill="#d88bc4" />
      <path d="M44 72 L72 30 V72 Z" fill="#f0f0f0" />
      <path d="M42 72 L52 56 L62 72 Z" fill="#f2c937" />
      <path d="M48 0 Q50 22 72 24" stroke="#cfd2d6" strokeWidth="8" fill="none" />
      <path d="M30 0 H40 V36 H30 Z" fill="#3d7ff0" />
      <circle cx="35" cy="41" r="15" fill="#fff" />
      <circle cx="35" cy="41" r="12" fill="#2f7de8" />
      <path d="M35 32 L41 48 L35 45 L29 48 Z" fill="#fff" />
    </AppIcon>
  );
}

function FaceTime() {
  return (
    <AppIcon bg="#5ccb58">
      <rect x="12" y="22" width="32" height="29" rx="7" fill="#e6f6e3" />
      <path d="M47 34 L60 24 V49 L47 39 Z" fill="#e6f6e3" />
    </AppIcon>
  );
}

function Photos() {
  const petals = ["#f3a23c", "#f6cf3d", "#b0cd45", "#5fb56d", "#5aa1d0", "#7d6cc0", "#c25ca8", "#e65a4b"];
  return (
    <AppIcon>
      {petals.map((c, i) => (
        <ellipse key={c} cx="36" cy="21" rx="9" ry="15" fill={c} fillOpacity="0.8" transform={`rotate(${i * 45} 36 36)`} />
      ))}
    </AppIcon>
  );
}

function Calendar() {
  return (
    <div className="w-[72px] h-[72px] rounded-[16px] overflow-hidden bg-white flex flex-col items-center">
      <div className="w-full h-[22px] bg-[#e5574d] text-white text-[15px] font-bold leading-[22px] text-center">NOV</div>
      <div className="text-[44px] leading-[48px] font-light text-[#222]">21</div>
    </div>
  );
}

function Contacts() {
  return (
    <AppIcon bg="#a5824c">
      <circle cx="36" cy="36" r="27" fill="none" stroke="#8e6f3e" strokeWidth="3" />
      <circle cx="36" cy="28" r="9" fill="#8e6f3e" />
      <path d="M18 54 Q36 32 54 54" fill="#8e6f3e" />
    </AppIcon>
  );
}

function Reminders() {
  return (
    <AppIcon>
      {[["#2f80ed", 16], ["#e8433a", 36], ["#f0962c", 56]].map(([c, y]) => (
        <g key={c}>
          <circle cx="15" cy={y} r="6" fill={c} stroke="#e8e8e8" strokeWidth="1.5" />
          <path d={`M28 ${y} H62`} stroke="#bdbdbd" strokeWidth="2" />
        </g>
      ))}
    </AppIcon>
  );
}

function Notes() {
  return (
    <AppIcon bg="#f0efe9">
      <path d="M0 18 V16 Q0 0 16 0 H56 Q72 0 72 16 V18 Z" fill="#f7cf45" />
      <path d="M0 20 H72" stroke="#b9b7ad" strokeWidth="1" strokeDasharray="2 2" />
      <path d="M0 37 H72 M0 54 H72" stroke="#d2d1ca" strokeWidth="2" />
    </AppIcon>
  );
}

function AppleTv() {
  return (
    <div className="w-[72px] h-[72px] rounded-[16px] bg-[#17211f] flex items-center justify-center text-white">
      <FaApple className="w-[22px] h-[24px]" />
      <span className="ml-[1px] text-[27px] font-medium leading-none">tv</span>
    </div>
  );
}

function Music() {
  return (
    <AppIcon bg="#ef4a5c">
      <path d="M27 51 V20 L53 15 V46" stroke="#fff" strokeWidth="4.5" fill="none" />
      <ellipse cx="21" cy="52" rx="8" ry="6.5" fill="#fff" />
      <ellipse cx="47" cy="47" rx="8" ry="6.5" fill="#fff" />
    </AppIcon>
  );
}

function News() {
  return (
    <AppIcon>
      <rect x="14" y="14" width="44" height="44" rx="4" fill="#e8404f" />
      <path d="M24 14 H36 L58 48 V58 H48 Z" fill="#fff" />
    </AppIcon>
  );
}

function Keynote() {
  return (
    <AppIcon bg="#2f78ee">
      <rect width="72" height="30" rx="14" fill="#55b5f5" />
      <rect x="12" y="11" width="48" height="32" rx="1" fill="#f4f4f4" />
      <circle cx="36" cy="26" r="9" fill="#e8a53a" />
      <path d="M36 26 V17 A9 9 0 0 1 43 31 Z" fill="#e8543a" />
      <path d="M36 43 V59 M28 60 H44" stroke="#f4f4f4" strokeWidth="4" />
    </AppIcon>
  );
}

function Numbers() {
  return (
    <AppIcon bg="#5fcf45">
      <path d="M14 62 V44 M28 62 V34 M42 62 V8 M56 62 V26" stroke="#eef8ea" strokeWidth="8" />
    </AppIcon>
  );
}

function Pages() {
  return (
    <AppIcon bg="#f29a2e">
      <path d="M50 6 L58 12 L28 58 L18 64 L20 52 Z" fill="#f5f5f5" />
      <path d="M8 62 H64" stroke="#f9d9a8" strokeWidth="2" />
    </AppIcon>
  );
}

function AppStore() {
  return (
    <AppIcon bg="#2f7ee6">
      <path d="M36 10 L18 54 M30 10 L52 54 M12 42 H60" stroke="#fff" strokeWidth="6" fill="none" strokeLinecap="round" />
    </AppIcon>
  );
}

function Chrome() {
  return (
    <AppIcon bg="#f2f2f2">
      <path d="M36 8 A28 28 0 0 1 60 22 H36 Z" fill="#d0493a" />
      <path d="M36 8 A28 28 0 0 0 12 50 L24 29 Z" fill="#d0493a" />
      <path d="M12 50 A28 28 0 0 0 36 64 L48 43 L24 43 Z" fill="#3f9d55" />
      <path d="M60 22 A28 28 0 0 1 36 64 L48 43 V22 Z" fill="#f5cf4d" />
      <circle cx="36" cy="36" r="14" fill="#fff" />
      <circle cx="36" cy="36" r="11" fill="#5b8ae6" />
    </AppIcon>
  );
}

function SysPrefs() {
  return (
    <AppIcon bg="#9a9fa3">
      <circle cx="36" cy="36" r="28" fill="#3a3a3a" stroke="#ccd1d4" strokeWidth="4" strokeDasharray="3 2" />
      <circle cx="36" cy="36" r="21" fill="#8e9193" />
      <circle cx="36" cy="36" r="15" fill="#555" />
      <path d="M36 36 V16 M36 36 L19 46 M36 36 L53 46" stroke="#ccd1d4" strokeWidth="5" />
    </AppIcon>
  );
}

function Excel() {
  return (
    <AppIcon>
      <rect x="20" y="12" width="40" height="48" rx="3" fill="#2f7d4e" />
      <rect x="38" y="12" width="22" height="12" fill="#5fb98a" />
      <rect x="38" y="24" width="22" height="12" fill="#3f9a6a" />
      <rect x="8" y="23" width="26" height="26" rx="2" fill="#1f6b3e" />
      <text x="21" y="42" textAnchor="middle" fontSize="19" fontWeight="700" fill="#fff" fontFamily="'Liberation Sans', sans-serif">X</text>
    </AppIcon>
  );
}

function Trash() {
  return (
    <svg viewBox="0 0 70 84" className="w-[70px] h-[84px] -mt-[6px]">
      <path d="M10 18 H60 L54 78 Q35 86 16 78 Z" fill="#6e6e6e" fillOpacity="0.8" stroke="#a0a0a0" />
      <ellipse cx="35" cy="16" rx="26" ry="8" fill="#c8c8c8" />
      <path d="M14 16 L22 4 L30 14 L38 3 L46 14 L54 6 L58 16" fill="#e8e8e8" stroke="#666" />
    </svg>
  );
}

const dockApps = [
  { c: Finder, dot: true },
  { c: Launchpad },
  { c: Safari },
  { c: Messages },
  { c: Mail },
  { c: Maps },
  { c: FaceTime },
  { c: Photos, badge: "1" },
  { c: Calendar },
  { c: Contacts },
  { c: Reminders },
  { c: Notes },
  { c: AppleTv },
  { c: Music },
  { c: News },
  { c: Keynote },
  { c: Numbers },
  { c: Pages },
  { c: AppStore },
  { c: Chrome, dot: true },
  { c: SysPrefs }
];

function DockSlot({ app }) {
  const Comp = app.c;
  return (
    <div className="relative w-[72px] h-[72px] shrink-0">
      <Comp />
      {app.dot && <div className="absolute left-[32px] top-[81px] w-[8px] h-[8px] rounded-full bg-[#a8a8a8]" />}
      {app.badge && (
        <div className="absolute left-[47px] -top-[8px] w-[32px] h-[32px] rounded-full bg-[#e8473a] text-white text-[20px] flex items-center justify-center">{app.badge}</div>
      )}
    </div>
  );
}

function Dock() {
  return (
    <div className="relative ml-[172px] mt-[2px] w-[2537px] h-[112px] rounded-[30px] border-2 border-[#4a4a4a] bg-[linear-gradient(90deg,#2a2a2a_0%,#4a4a4a_12%,#5a5a5a_14%,#2c2c2c_22%,#1c1c1c_60%,#1b1b1b_82%,#6f6f6f_89%,#808080_100%)] flex pl-[13px] pt-[14px]">
      <div className="flex gap-[22px]">
        {dockApps.map((app, i) => (
          <DockSlot key={i} app={app} />
        ))}
      </div>
      <div className="relative ml-[20px] -mt-[2px] w-[77px] h-[77px] bg-[#f5f5f5] shrink-0 flex items-center justify-center">
        <TableauMark className="w-[62px] h-[62px]" mono="#4a7cae" />
        <div className="absolute left-[34px] top-[83px] w-[8px] h-[8px] rounded-full bg-[#a8a8a8]" />
      </div>
      <div className="ml-[29px] -mt-[2px] w-[1px] h-[84px] bg-[#9a9a9a] shrink-0" />
      <div className="relative ml-[31px] shrink-0">
        <Excel />
        <div className="absolute left-[32px] top-[81px] w-[8px] h-[8px] rounded-full bg-[#a8a8a8]" />
      </div>
      <div className="ml-[21px] w-[72px] h-[72px] rounded-[16px] bg-[#a52a17] flex items-center justify-center shrink-0">
        <SiAdobeacrobatreader className="w-[50px] h-[50px] text-white" />
      </div>
      <svg viewBox="0 0 72 72" className="ml-[22px] w-[72px] h-[72px] shrink-0">
        <circle cx="36" cy="36" r="36" fill="#5fd46c" />
        <path d="M16 26 Q38 18 57 30 M19 38 Q38 31 53 41 M22 49 Q38 43 50 52" stroke="#111" strokeWidth="6" fill="none" strokeLinecap="round" />
      </svg>
      <div className="ml-[34px] -mt-[2px] w-[1px] h-[84px] bg-[#d0d0d0] shrink-0" />
      <div className="ml-[29px] shrink-0">
        <Trash />
      </div>
    </div>
  );
}

export default function App() {
  return (
    <div className="relative w-[2880px] h-[1800px] overflow-hidden font-['Roboto',sans-serif]">
      <Wallpaper />
      <MenuBar />
      <div className="relative mt-[2px] h-[1626px] rounded-[20px] overflow-hidden bg-[#f5f5f5] flex flex-col">
        <div className="h-[56px] bg-[#f0f0f0] border-b-2 border-[#d4d4d4] flex items-center relative shrink-0">
          <div className="ml-[16px] flex gap-[17px]">
            <div className="w-[24px] h-[24px] rounded-full bg-[#ee6a5f]" />
            <div className="w-[24px] h-[24px] rounded-full bg-[#f5bd4f]" />
            <div className="w-[24px] h-[24px] rounded-full bg-[#61c454]" />
          </div>
          <div className="absolute left-[1232px] top-0 h-full flex items-center">
            <div className="w-[28px] h-[38px] bg-[#fafafa] flex items-center justify-center">
              <TableauMark className="w-[26px] h-[34px]" mono="#6e96b8" />
            </div>
            <span className="ml-[10px] text-[26.5px] font-semibold text-[#4d4d4d] font-['Inter',sans-serif] whitespace-nowrap">Tableau - Drug use in Indiana</span>
          </div>
        </div>
        <Toolbar />
        <div className="h-[1389px] flex shrink-0">
          <DataPanel />
          <div className="ml-[12px] w-[308px] h-[1376px] flex flex-col gap-[14px] shrink-0">
            <Card title="Pages" className="h-[123px]" />
            <Card title="Filters" className="h-[246px]">
              <div className="mt-[7px] px-[8px] flex flex-col gap-[6px]">
                <Pill label="Measure Names" tone="blue" />
                <Pill label="County Names" tone="blue" />
                <Pill label="County" tone="blue" />
              </div>
            </Card>
            <MarksCard />
            <MeasureValuesCard />
          </div>
          <div className="ml-[13px] w-[2115px] flex flex-col shrink-0">
            <Shelf
              label="Columns"
              icon={
                <svg viewBox="0 0 20 32" className="w-[20px] h-[30px]" fill="#777">
                  <path d="M0 0 h5 v5 h-5 z M8 0 h5 v5 h-5 z M16 0 h4 v5 h-4 z M0 8 h5 v24 h-5 z M8 8 h5 v24 h-5 z M16 8 h4 v24 h-4 z" />
                </svg>
              }
              pill="Longitude (generated)"
            />
            <Shelf
              label="Rows"
              className="mt-[13px]"
              icon={
                <svg viewBox="0 0 24 24" className="w-[24px] h-[26px]" fill="#777">
                  <path d="M0 1 h5 v5 h-5 z M8 1 h16 v5 h-16 z M0 10 h5 v5 h-5 z M8 10 h16 v5 h-16 z M0 19 h5 v5 h-5 z M8 19 h16 v5 h-16 z" />
                </svg>
              }
              pill="Latitude (generated)"
            />
            <div className="mt-[14px] h-[1239px] flex">
              <Viz />
              <Legend />
            </div>
          </div>
        </div>
        <TabBar />
        <StatusBar />
      </div>
      <Dock />
    </div>
  );
}
